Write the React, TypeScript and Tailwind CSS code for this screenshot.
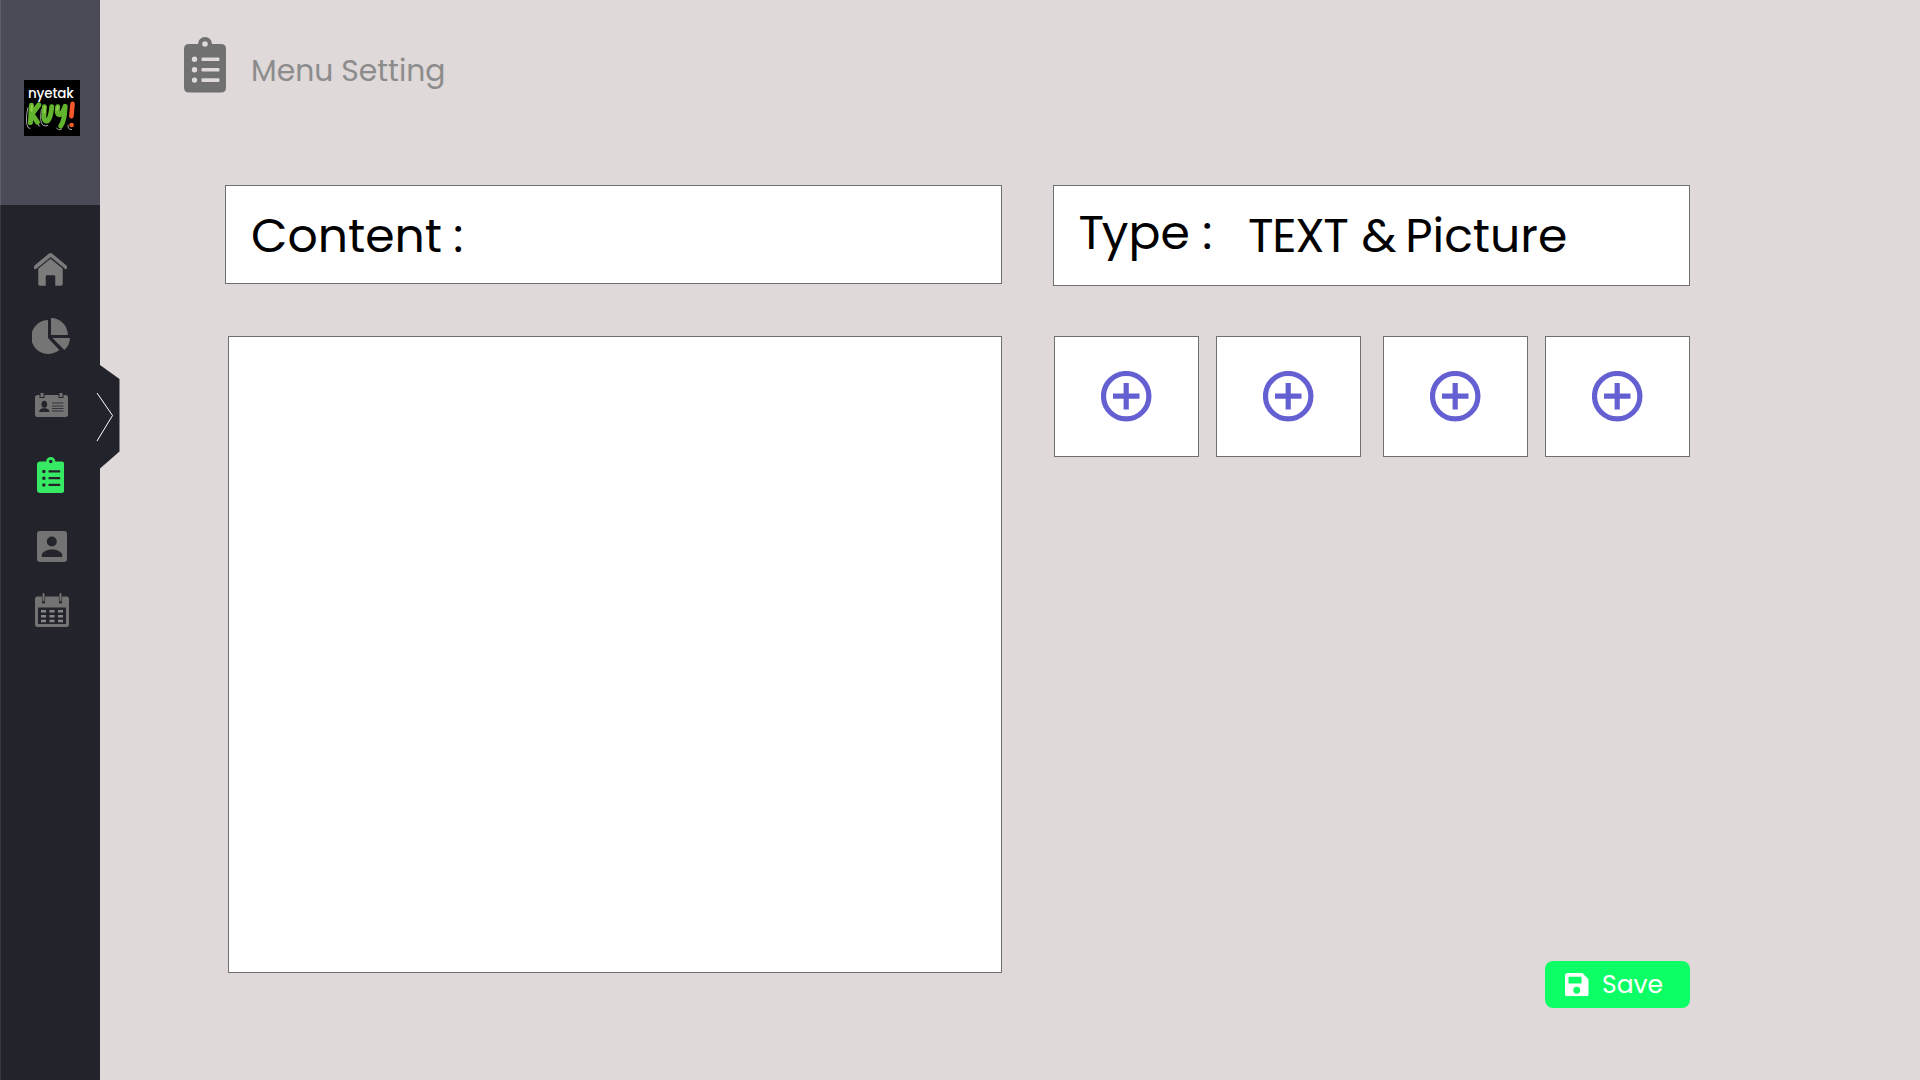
import React from "react";

const font = "font-['Poppins','Inter',sans-serif]";

function Clipboard({ className }: { className: string }) {
  return (
    <svg viewBox="0 0 42 56" className={className} fill="currentColor" preserveAspectRatio="none">
      <path
        fillRule="evenodd"
        d="M5 7H14A7 7 0 0 1 28 7H37Q42 7 42 12V51Q42 56 37 56H5Q0 56 0 51V12Q0 7 5 7ZM21 4.2a2.8 2.8 0 1 0 0 5.6a2.8 2.8 0 1 0 0-5.6ZM10.5 19.8a2.7 2.7 0 1 0 0 5.4a2.7 2.7 0 1 0 0-5.4ZM10.5 30.3a2.7 2.7 0 1 0 0 5.4a2.7 2.7 0 1 0 0-5.4ZM10.5 40.8a2.7 2.7 0 1 0 0 5.4a2.7 2.7 0 1 0 0-5.4ZM18.5 20.7h16q1 0 1 1v1.6q0 1-1 1h-16q-1 0-1-1v-1.6q0-1 1-1ZM18.5 31.2h16q1 0 1 1v1.6q0 1-1 1h-16q-1 0-1-1v-1.6q0-1 1-1ZM18.5 41.7h16q1 0 1 1v1.6q0 1-1 1h-16q-1 0-1-1v-1.6q0-1 1-1Z"
      />
    </svg>
  );
}

function Home() {
  return (
    <svg viewBox="0 0 33 33" className="ml-[34px] mt-[48px] h-[33px] w-[33px]" fill="#7b7b7b">
      <path d="M14.6.8Q16.5-.7 18.4.8L32.2 12.2Q33 13 33 14V15.5Q32 17 30.4 15.6L16.5 4.2L2.6 15.6Q1 17 0 15.5V14Q0 13 .8 12.2Z" />
      <path d="M16.500 4.200L30 15.200" stroke="#23232b" strokeWidth=".6" />
      <path d="M16.5 5.4L29 15.6V31Q29 33 27 33H21V23.5Q21 22.5 20 22.5H13Q12 22.5 12 23.5V33H6Q4 33 4 31V15.6Z" stroke="#23232b" strokeWidth=".5" />
    </svg>
  );
}

function Pie() {
  return (
    <svg viewBox="0 0 38 36" className="ml-[32px] mt-[32px] h-[36px] w-[38px]" fill="#757575">
      <path d="M16 2V20L27.3 31.9A17 17 0 1 1 16 2Z" />
      <path d="M19 0A17 17 0 0 1 35.8 17H19Z" />
      <path d="M20.5 20H38Q37.8 27 32.4 32Z" />
    </svg>
  );
}

function IdCard() {
  return (
    <svg viewBox="0 0 33 25" className="ml-[35px] mt-[38px] h-[25px] w-[33px]">
      <rect y="3" width="33" height="22" rx="2.5" fill="#737373" />
      <g fill="#737373" stroke="#24242c" strokeWidth="1">
        <rect x="5" y="0.5" width="4" height="5" />
        <rect x="24" y="0.5" width="4" height="5" />
      </g>
      <g fill="#24242c">
        <ellipse cx="9.3" cy="12.3" rx="2.8" ry="3.5" />
        <path d="M4.2 20Q4.2 17 8 16.3H10.6Q14.4 17 14.4 20Z" />
      </g>
      <path d="M17 11H28.5M17 14H28.5M17 16.5H28.5M17 19H28.5" stroke="#34343c" strokeWidth="1.2" />
    </svg>
  );
}

function Person() {
  return (
    <svg viewBox="0 0 30 31" className="ml-[36.5px] mt-[38px] h-[31px] w-[30px]">
      <rect width="30" height="31" rx="3" fill="#737373" />
      <g fill="#24242c">
        <circle cx="14.8" cy="10.5" r="5" />
        <path d="M4.8 26V24.3C4.8 20.5 11 18.6 15 18.6S25.2 20.5 25.2 24.3V26Z" />
      </g>
    </svg>
  );
}

function Calendar() {
  return (
    <svg viewBox="0 0 34 34" className="ml-[35px] mt-[31px] h-[34px] w-[34px]">
      <rect y="3.5" width="34" height="30.5" rx="2.5" fill="#737373" />
      <rect x="3" y="14.5" width="28" height="16.5" fill="#24242c" />
      <path d="M8.5 1.5V9M25.5 1.5V9" stroke="#24242c" strokeWidth="3.2" strokeLinecap="round" />
      <path d="M8.5 1V7.5M25.5 1V7.5" stroke="#737373" strokeWidth="2" strokeLinecap="round" />
      <path d="M6 18.2H28M6 23.2H28M6 28H28" stroke="#858585" strokeWidth="2.4" strokeDasharray="5 3.5" />
    </svg>
  );
}

function Logo() {
  return (
    <div className={`relative ml-[24px] h-[55.5px] w-[55.5px] bg-black text-center ${font}`}>
      <div className="pr-[2px] pt-[4.5px] text-[13.5px] font-medium leading-[18px] tracking-[-0.2px] text-white">nyetak</div>
      <svg viewBox="0 0 56 56" className="absolute inset-0" fill="none" strokeLinecap="round" strokeLinejoin="round">
        <path
          d="M4 28Q1.500 38 3 45Q3.500 49 6 49M14 44Q14 47 16 46.500M17.500 30Q15.500 42 19 45.500Q21 47 24 46M33 48.500Q34.500 51.500 38 49.500M44.500 45.500Q43.500 50 48 50"
          stroke="#aaa"
          strokeWidth="1"
        />
        <g stroke="#62b32e" strokeWidth="5">
          <path d="M7.500 25.500L6.500 43M15 25L8 34.500L13.500 42.500" />
          <path d="M20.500 27L20 37Q20.500 42.500 24 41Q27 38 28 27" />
          <path d="M34 27Q32.500 35 36 35Q39 34 41.500 26.500M41.500 27Q41 41 37 46.500" />
        </g>
        <path d="M21 27L20.500 33M34 27L33.500 30M8 26L7.500 31" stroke="#95d04b" strokeWidth="2" />
        <path d="M49 24L47.800 36.500M48 45.500h.1" stroke="#f4592b" strokeWidth="4.600" />
      </svg>
    </div>
  );
}

function Tile({ className = "" }: { className?: string }) {
  return (
    <div className={`flex h-[121px] w-[145px] items-center justify-center border border-[#707070] bg-white ${className}`}>
      <svg viewBox="0 0 51 51" className="h-[51px] w-[51px]" fill="none" stroke="#6460d2" strokeWidth="5.200">
        <circle cx="25.200" cy="25.200" r="22.700" />
        <path d="M25.200 12V38.500M12 25.200H38.500" />
      </svg>
    </div>
  );
}

export default function App() {
  return (
    <div className={`flex h-[1080px] w-[1920px] overflow-hidden bg-[#dfd9d9] ${font}`}>
      <aside className="relative h-full w-[100px] shrink-0 bg-[#23232b]">
        <div className="h-[205px] bg-[#4a4b57] pt-[80px]">
          <Logo />
        </div>
        <nav className="flex flex-col">
          <Home />
          <Pie />
          <IdCard />
          <Clipboard className="ml-[36.5px] mt-[40px] h-[36px] w-[27.5px] text-[#37ea63]" />
          <Person />
          <Calendar />
        </nav>
        <div className="absolute inset-y-0 left-0 w-px bg-white/10" />
        <svg viewBox="0 0 24 104" className="absolute left-[96px] top-[365px] h-[104px] w-[24px]" fill="none">
          <path d="M0 0H4L23.500 14V86.500L4 103.500H0Z" fill="#23232b" />
          <path d="M1 28L16.500 50.500L1 76" stroke="#fff" strokeWidth="1" />
        </svg>
      </aside>

      <main className="flex flex-col">
        <header className="flex h-[185px]">
          <Clipboard className="ml-[83.500px] mt-[37px] h-[55.500px] w-[42px] text-[#707070]" />
          <h1 className="ml-[25.5px] mt-[48.5px] whitespace-nowrap text-[29.8px] leading-[44px] text-[#8c8c8c]">Menu Setting</h1>
        </header>

        <div className="ml-[125px] flex">
          <section className="flex w-[777px] flex-col">
            <div className="flex h-[99px] border border-[#707070] bg-white pl-[25px] pt-[20px]">
              <span className="whitespace-nowrap text-[47.3px] leading-[60px] [word-spacing:-1.5px]">Content :</span>
            </div>
            <div className="ml-[3px] mt-[52px] h-[637px] border border-[#707070] bg-white" />
          </section>

          <section className="ml-[51px] flex w-[637px] flex-col">
            <div className="flex h-[101px] border border-[#707070] bg-white">
              <span className="ml-[24.5px] mt-[17px] w-[169.5px] whitespace-nowrap text-[47.3px] leading-[60px]">
                <span className="tracking-[-2.3px]">T</span>ype :
              </span>
              <span className="mt-[20px] whitespace-nowrap text-[47.3px] leading-[60px]">
                <span className="tracking-[-1.3px]">TEX</span>T <span className="tracking-[-2px]">&amp; </span>Picture
              </span>
            </div>
            <div className="ml-px mt-[50px] flex">
              <Tile />
              <Tile className="ml-[17px]" />
              <Tile className="ml-[22px]" />
              <Tile className="ml-[17px]" />
            </div>
            <button className="ml-auto mt-[504px] flex h-[47px] w-[145px] rounded-[8px] bg-[#0dff66] text-white">
              <svg viewBox="0 0 23 23" className="ml-[20px] mt-[11.500px] h-[23.500px] w-[23.500px]" fill="currentColor">
                <path
                  fillRule="evenodd"
                  d="M2.500 0H17L23 6V20.500Q23 23 20.500 23H2.500Q0 23 0 20.500V2.500Q0 0 2.500 0ZM3.400 3.600V10.200H16.200V3.600ZM11.500 13.400a3.400 3.400 0 1 0 0 6.800a3.400 3.400 0 1 0 0-6.800Z"
                />
              </svg>
              <span className="ml-[13.5px] mt-[8px] text-[25px] leading-[32px]">Save</span>
            </button>
          </section>
        </div>
      </main>
    </div>
  );
}
